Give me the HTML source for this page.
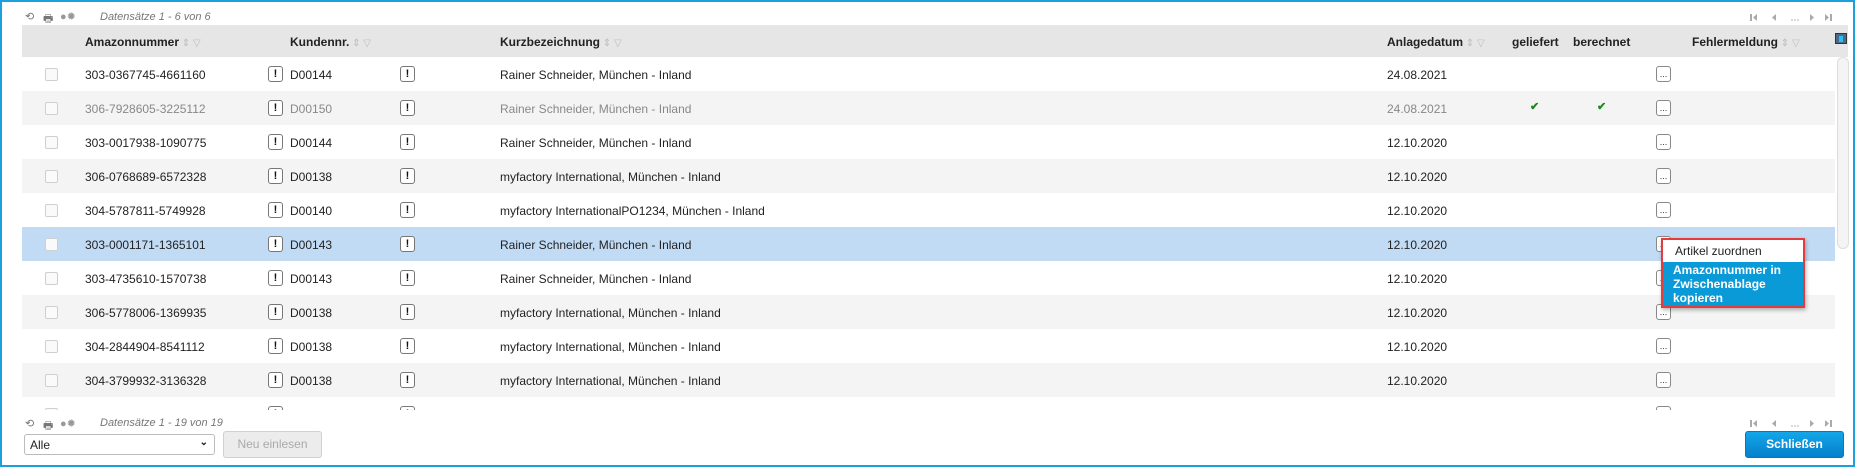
<!DOCTYPE html>
<html><head><meta charset="utf-8"><style>
*{box-sizing:border-box;margin:0;padding:0}
body{width:1855px;height:467px;overflow:hidden;background:#fff;font-family:"Liberation Sans",Arial,sans-serif;font-size:12px;color:#222;position:relative}
.frame{position:absolute;left:0;top:0;width:1855px;height:467px;border:2px solid #1aa0dc;}
.a{position:absolute;white-space:nowrap}
.hdr{position:absolute;left:22px;top:25px;width:1826px;height:32px;background:#e6e6e6}
.hdr .a{top:10px;font-weight:bold;font-size:12px;color:#222}
.row{position:absolute;left:22px;width:1813px;height:34px}
.row .a{top:11px}
.cb{position:absolute;left:23px;top:11px;width:13px;height:13px;border:1px solid #cfcfcf;border-radius:2px;background:#fafafa}
.ex{position:absolute;top:9px;width:15px;height:16px;border:1px solid #777;border-radius:3px;background:#fff;font-weight:bold;font-size:11px;text-align:center;line-height:14px;color:#111}
.dots{position:absolute;top:9px;left:1634px;width:15px;height:16px;border:1px solid #888;border-radius:3px;background:#fff;font-size:9px;text-align:center;line-height:14px;color:#333}
.chk{position:absolute;top:9px;color:#1a8a1a;font-size:11px;font-weight:bold}
.sort{color:#bbb;font-size:10px;font-weight:normal}
.tb{color:#777;font-size:11px}
</style></head><body>
<div class="frame"></div>
<div class="a tb" style="left:25px;top:10px">⟲</div>
<div class="a tb" style="left:43px;top:10px">🖶</div>
<div class="a tb" style="left:60px;top:10px;color:#999">●✹</div>
<div class="a" style="left:100px;top:11px;font-style:italic;color:#777;font-size:11px">Datensätze 1 - 6 von 6</div>
<svg class="a" style="left:1750px;top:14px" width="82" height="8"><g fill="#aaa"><rect x="0" y="0" width="2" height="7"/><path d="M7 0L3 3.5L7 7Z"/><path d="M26 0L22 3.5L26 7Z"/><circle cx="42" cy="6" r=".8"/><circle cx="45" cy="6" r=".8"/><circle cx="48" cy="6" r=".8"/><path d="M60 0L64 3.5L60 7Z"/><path d="M75 0L79 3.5L75 7Z"/><rect x="80" y="0" width="2" height="7"/></g></svg>

<div class="hdr">
<div class="a" style="left:63px">Amazonnummer<span class="sort"> ⇕ ▽</span></div>
<div class="a" style="left:268px">Kundennr.<span class="sort"> ⇕ ▽</span></div>
<div class="a" style="left:478px">Kurzbezeichnung<span class="sort"> ⇕ ▽</span></div>
<div class="a" style="left:1365px">Anlagedatum<span class="sort"> ⇕ ▽</span></div>
<div class="a" style="left:1490px">geliefert</div>
<div class="a" style="left:1551px">berechnet</div>
<div class="a" style="left:1670px">Fehlermeldung<span class="sort"> ⇕ ▽</span></div>
<div class="a" style="left:1813px;top:8px;width:12px;height:11px;background:#4a6a8a;border:1px solid #333"><div style="margin:2px 3px;width:4px;height:6px;background:#2cc0f0"></div></div>
</div>

<div id="rows"></div>
<div style="position:absolute;left:1837px;top:57px;width:12px;height:192px;border:1px solid #ddd;border-radius:6px;background:#f4f4f4"></div>
<div style="position:absolute;left:22px;top:410px;width:1830px;height:20px;background:#fff"></div>

<div class="a tb" style="left:25px;top:417px">⟲</div>
<div class="a tb" style="left:43px;top:417px">🖶</div>
<div class="a tb" style="left:60px;top:417px;color:#999">●✹</div>
<div class="a" style="left:100px;top:417px;font-style:italic;color:#777;font-size:11px">Datensätze 1 - 19 von 19</div>
<svg class="a" style="left:1750px;top:420px" width="82" height="8"><g fill="#aaa"><rect x="0" y="0" width="2" height="7"/><path d="M7 0L3 3.5L7 7Z"/><path d="M26 0L22 3.5L26 7Z"/><circle cx="42" cy="6" r=".8"/><circle cx="45" cy="6" r=".8"/><circle cx="48" cy="6" r=".8"/><path d="M60 0L64 3.5L60 7Z"/><path d="M75 0L79 3.5L75 7Z"/><rect x="80" y="0" width="2" height="7"/></g></svg>

<div class="a" style="left:24px;top:434px;width:191px;height:21px;border:1px solid #bbb;border-radius:3px;background:#fff;padding:3px 5px;font-size:12px">Alle<span style="position:absolute;right:6px;top:2px;font-size:10px;font-weight:bold">⌄</span></div>
<div class="a" style="left:223px;top:431px;width:99px;height:27px;border:1px solid #d0d0d0;border-radius:3px;background:#ececec;color:#aaa;text-align:center;line-height:25px;font-size:12px">Neu einlesen</div>
<div class="a" style="left:1745px;top:431px;width:99px;height:27px;border-radius:3px;background:linear-gradient(#14a6e8,#0580cc);border:1px solid #0a78c0;color:#fff;font-weight:bold;text-align:center;line-height:25px;font-size:12px">Schließen</div>

<div class="a" style="left:1661px;top:238px;width:144px;height:70px;border:2px solid #e53b3b;background:#fff;box-shadow:1px 2px 4px rgba(0,0,0,.3)">
<div style="height:22px;padding:4px 12px;font-size:12px;color:#222">Artikel zuordnen</div>
<div style="height:44px;background:#0a9ad8;color:#fff;font-weight:bold;font-size:12px;line-height:14px;padding:1px 10px;white-space:normal">Amazonnummer in<br>Zwischenablage<br>kopieren</div>
</div>

<script>
var d=[["303-0367745-4661160","D00144","Rainer Schneider, München - Inland","24.08.2021"],
["306-7928605-3225112","D00150","Rainer Schneider, München - Inland","24.08.2021"],
["303-0017938-1090775","D00144","Rainer Schneider, München - Inland","12.10.2020"],
["306-0768689-6572328","D00138","myfactory International, München - Inland","12.10.2020"],
["304-5787811-5749928","D00140","myfactory InternationalPO1234, München - Inland","12.10.2020"],
["303-0001171-1365101","D00143","Rainer Schneider, München - Inland","12.10.2020"],
["303-4735610-1570738","D00143","Rainer Schneider, München - Inland","12.10.2020"],
["306-5778006-1369935","D00138","myfactory International, München - Inland","12.10.2020"],
["304-2844904-8541112","D00138","myfactory International, München - Inland","12.10.2020"],
["304-3799932-3136328","D00138","myfactory International, München - Inland","12.10.2020"],
["304-0000000-0000004","D00138","myfactory International, München - Inland","12.10.2020"]];
var h="";
d.forEach(function(r,i){
var bg=i==5?"#c2dbf5":(i%2?"#f4f4f4":"#fff");var c=i==1?"color:#888":"";
h+='<div class="row" style="top:'+(57+i*34)+'px;background:'+bg+';'+c+'"><div class="cb"></div>'+
'<div class="a" style="left:63px">'+r[0]+'</div><div class="ex" style="left:246px">!</div>'+
'<div class="a" style="left:268px">'+r[1]+'</div><div class="ex" style="left:378px">!</div>'+
'<div class="a" style="left:478px">'+r[2]+'</div><div class="a" style="left:1365px">'+r[3]+'</div>'+
(i==1?'<div class="chk" style="left:1508px">✔</div><div class="chk" style="left:1575px">✔</div>':'')+
'<div class="dots">...</div></div>';});
document.getElementById("rows").innerHTML=h;
</script>
</body></html>
